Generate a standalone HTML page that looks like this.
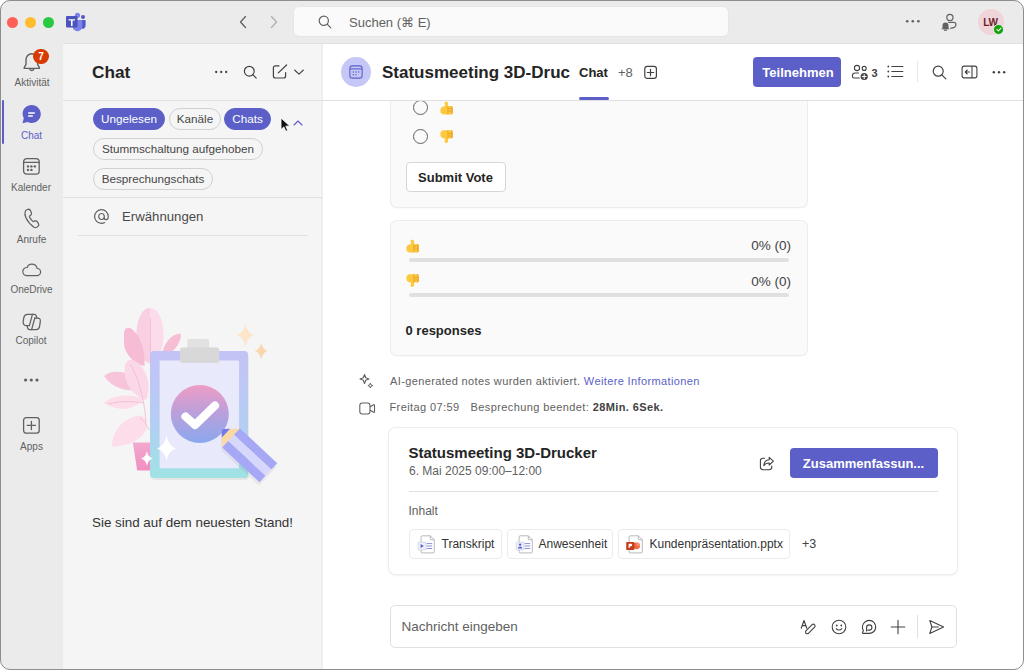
<!DOCTYPE html>
<html><head><meta charset="utf-8">
<style>
*{box-sizing:border-box;margin:0;padding:0}
html,body{width:1024px;height:670px;overflow:hidden;background:#fff}
body{font-family:"Liberation Sans",sans-serif;color:#242424;position:relative}
.win{position:absolute;left:0;top:0;width:1024px;height:670px;border-radius:10px;background:#ebebeb;overflow:hidden}
.frame{position:absolute;left:0;top:0;width:1024px;height:670px;border-radius:10px;border:1px solid #8e8e8e;pointer-events:none;z-index:50}
.a{position:absolute}
.t{position:absolute;white-space:nowrap;line-height:1}
svg{position:absolute;overflow:visible}
.light{position:absolute;width:11px;height:11px;border-radius:50%;top:16.6px}
.rl{position:absolute;left:0;width:63px;text-align:center;font-size:10px;color:#616161;line-height:1;white-space:nowrap}
.pill{position:absolute;height:22px;border-radius:11px;border:1px solid #d1d1d1;background:#f5f5f5;font-size:11.7px;color:#474747;line-height:20px;padding:0;text-align:center;white-space:nowrap}
.chip{border:1px solid #ebebeb;border-radius:4px;background:#fff}
.pill.on{background:#5b5fc7;border-color:#5b5fc7;color:#fff}
</style></head>
<body>
<div class="win">
  <!-- title bar -->
  <div class="light" style="left:6.9px;background:#ff5f57"></div>
  <div class="light" style="left:24.8px;background:#febc2e"></div>
  <div class="light" style="left:42.6px;background:#28c840"></div>
  <!-- teams logo -->
  <svg style="left:64px;top:11px" width="24" height="22" viewBox="0 0 24 22">
    <circle cx="13.5" cy="4.3" r="2.6" fill="#7b83eb"/>
    <circle cx="19" cy="6" r="2" fill="#5059c9"/>
    <path d="M15.6 9h5.2c.5 0 .8.3.8.8v4.6c0 2-1.6 3.4-3.4 3.4h0c-1.8 0-3.2-1.5-3.2-3.3V9.5z" fill="#5059c9"/>
    <path d="M9.5 9h8c.5 0 .8.3.8.8v5.4c0 2.8-2.3 5-5 5s-4.6-2-4.8-4.4z" fill="#7b83eb"/>
    <rect x="2" y="5" width="11.5" height="11.5" rx="1" fill="#4b53bc"/>
    <path d="M4.6 8.2h6.4v1.4H8.6v5.3H7V9.6H4.6z" fill="#fff"/>
  </svg>
  <!-- nav arrows -->
  <svg style="left:238px;top:15px" width="10" height="14" viewBox="0 0 10 14"><path d="M7.5 1.5L2.5 7l5 5.5" fill="none" stroke="#616161" stroke-width="1.3" stroke-linecap="round" stroke-linejoin="round"/></svg>
  <svg style="left:269px;top:15px" width="10" height="14" viewBox="0 0 10 14"><path d="M2.5 1.5L7.5 7l-5 5.5" fill="none" stroke="#b0b0b0" stroke-width="1.3" stroke-linecap="round" stroke-linejoin="round"/></svg>
  <!-- search -->
  <div class="a" style="left:294px;top:7px;width:434px;height:29px;background:#fafafa;border-radius:5px;box-shadow:0 0 0 0.5px #e2e2e2"></div>
  <svg style="left:318px;top:15px" width="14" height="14" viewBox="0 0 14 14"><circle cx="5.8" cy="5.8" r="4.6" fill="none" stroke="#616161" stroke-width="1.2"/><path d="M9.2 9.2l3.6 3.6" stroke="#616161" stroke-width="1.2" stroke-linecap="round"/></svg>
  <div class="t" style="left:349px;top:15.5px;font-size:13px;color:#616161">Suchen (⌘ E)</div>
  <!-- right title icons -->
  <svg style="left:905px;top:19px" width="16" height="5" viewBox="0 0 16 5"><circle cx="2.2" cy="2.3" r="1.3" fill="#616161"/><circle cx="7.8" cy="2.3" r="1.3" fill="#616161"/><circle cx="13.4" cy="2.3" r="1.3" fill="#616161"/></svg>
  <svg style="left:940px;top:12px" width="18" height="20" viewBox="0 0 18 20">
    <circle cx="9.9" cy="5.4" r="3.1" fill="none" stroke="#616161" stroke-width="1.2"/>
    <path d="M8.5 10.3h5.2c1.3 0 2.2.9 2.2 2 0 2-2 3.8-5.2 3.9" fill="none" stroke="#616161" stroke-width="1.2" stroke-linecap="round"/>
    <path d="M5.5 10.5c-1.8 0-3 1.3-3 3v2.5l-1.2 1.3h8.4l-1.2-1.3v-2.5c0-1.7-1.2-3-3-3z" fill="#616161"/>
    <path d="M4.4 18.2h2.2" stroke="#616161" stroke-width="1.2" stroke-linecap="round"/>
  </svg>
  <div class="a" style="left:978px;top:9px;width:26px;height:26px;border-radius:50%;background:#efd5d9"></div>
  <div class="t" style="left:977.5px;top:18px;width:26px;text-align:center;font-size:10px;font-weight:700;color:#6e1c2d;letter-spacing:-0.2px">LW</div>
  <div class="a" style="left:993px;top:24px;width:11px;height:11px;border-radius:50%;background:#13a10e;border:1px solid #ebebeb"></div>
  <svg style="left:996px;top:27px" width="6" height="5" viewBox="0 0 6 5"><path d="M1 2.6l1.4 1.3L5 1.2" fill="none" stroke="#fff" stroke-width="1.1" stroke-linecap="round" stroke-linejoin="round"/></svg>

  <!-- RAIL -->
  <div id="rail">
  <!-- Aktivitat -->
  <svg style="left:22px;top:52px" width="20" height="20" viewBox="0 0 20 20">
    <path d="M9.8 1.8c-3.4 0-5.8 2.6-5.8 6v4.6L2.2 15.6c-.2.4 0 .8.5.8h14.2c.5 0 .7-.4.5-.8L15.6 12.4V7.8c0-3.4-2.4-6-5.8-6z" fill="none" stroke="#616161" stroke-width="1.4" stroke-linejoin="round"/>
    <path d="M7.6 16.6c.2 1.2 1.1 1.9 2.2 1.9s2-.7 2.2-1.9" fill="none" stroke="#616161" stroke-width="1.4"/>
  </svg>
  <div class="a" style="left:33.2px;top:48.6px;width:15.5px;height:15.5px;border-radius:50%;background:#d83b01"></div>
  <div class="t" style="left:33.2px;top:51.6px;width:15.5px;text-align:center;font-size:10px;font-weight:700;color:#fff">7</div>
  <div class="rl" style="top:78px;left:0.5px">Aktivität</div>
  <!-- active bar -->
  <div class="a" style="left:2px;top:100px;width:2px;height:44px;background:#5b5fc7;border-radius:1px"></div>
  <!-- Chat -->
  <svg style="left:21px;top:104px" width="21" height="21" viewBox="0 0 21 21">
    <path d="M10.7 1C5.6 1 1.6 4.9 1.6 9.8c0 1.6.4 3.1 1.2 4.4L1.5 19.3l5.2-1.3c1.2.7 2.6 1 4 1 5.1 0 9.1-3.9 9.1-8.9S15.8 1 10.7 1z" fill="#5b5fc7"/>
    <rect x="7" y="8.2" width="7" height="1.5" rx=".75" fill="#fff"/>
    <rect x="7" y="11.2" width="5" height="1.5" rx=".75" fill="#fff"/>
  </svg>
  <div class="rl" style="top:131px;color:#5b5fc7;left:0px">Chat</div>
  <!-- Kalender -->
  <svg style="left:22px;top:157px" width="19" height="19" viewBox="0 0 19 19">
    <rect x="1.6" y="1.6" width="15.6" height="15.6" rx="3.2" fill="none" stroke="#616161" stroke-width="1.3"/>
    <path d="M1.6 5.4h15.6" stroke="#616161" stroke-width="1.3"/>
    <circle cx="6" cy="9.4" r="1.2" fill="#616161"/><circle cx="9.4" cy="9.4" r="1.2" fill="#616161"/><circle cx="12.8" cy="9.4" r="1.2" fill="#616161"/>
    <circle cx="6" cy="12.9" r="1.2" fill="#616161"/><circle cx="9.4" cy="12.9" r="1.2" fill="#616161"/>
  </svg>
  <div class="rl" style="top:183px;left:-0.5px">Kalender</div>
  <!-- Anrufe -->
  <svg style="left:22.8px;top:207.5px" width="16.5" height="18.5" viewBox="0 0 18 20">
    <path d="M4.2 1.8l1.4-.4c1-.3 2 .2 2.4 1.1l1.1 2.6c.4.8.2 1.8-.5 2.4L7.1 8.8c-.2.2-.2.5-.1.7.8 1.8 2.1 3.6 3.8 5 .2.2.5.2.7.1l1.6-.6c.9-.3 1.9 0 2.4.8l1.4 2.3c.5.9.4 2-.4 2.6l-.9.8c-1 .8-2.5 1-3.6.4C8.3 18.3 5.2 14.9 3.2 10.6 2 8.1 1.8 5.9 2.4 3.9c.3-1 1-1.8 1.8-2.1z" fill="none" stroke="#616161" stroke-width="1.35" stroke-linejoin="round"/>
  </svg>
  <div class="rl" style="top:235px;left:0px">Anrufe</div>
  <!-- OneDrive -->
  <svg style="left:21px;top:262px" width="21" height="15" viewBox="0 0 21 15">
    <path d="M10.8 2.2c-2.2 0-4 1.4-4.6 3.3H6c-2.3 0-4.2 1.8-4.2 4.1s1.9 4.1 4.2 4.1h9.8c2.1 0 3.8-1.6 3.8-3.6s-1.5-3.5-3.4-3.6c-.5-2.5-2.7-4.3-5.4-4.3z" fill="none" stroke="#616161" stroke-width="1.2"/>
  </svg>
  <div class="rl" style="top:284.5px;left:0px">OneDrive</div>
  <!-- Copilot -->
  <svg style="left:16px;top:306px" width="32" height="30" viewBox="0 0 32 30">
    <g fill="none" stroke="#616161" stroke-width="1.25" stroke-linejoin="round" stroke-linecap="round">
    <path d="M16.4 8.3H11.4C9.4 8.3 8.2 9.6 7.8 11.6L7.2 15.6C6.9 17.9 8 19.6 10 19.6H13.4"/>
    <path d="M16.4 8.3L13.4 19.6"/>
    <path d="M16.4 8.3H18.4C19.4 8.3 20 9 20.3 10L20.8 12"/>
    <path d="M18.8 12H21.8C23.7 12 24.6 13.5 24.3 15.4L23.7 19.6C23.4 21.9 22 23.6 20 23.6H15.6"/>
    <path d="M18.8 12L15.6 23.6"/>
    <path d="M15.6 23.6H13.6C12.6 23.6 11.9 23 11.6 22L11.1 19.6"/>
    </g>
  </svg>
  <div class="rl" style="top:335.5px;left:-0.5px">Copilot</div>
  <!-- more -->
  <svg style="left:23px;top:377px" width="17" height="6" viewBox="0 0 17 6"><circle cx="2.6" cy="3" r="1.6" fill="#616161"/><circle cx="8.3" cy="3" r="1.6" fill="#616161"/><circle cx="14" cy="3" r="1.6" fill="#616161"/></svg>
  <!-- Apps -->
  <svg style="left:22px;top:416px" width="19" height="19" viewBox="0 0 19 19">
    <rect x="1.6" y="1.6" width="15.6" height="15.6" rx="2.6" fill="none" stroke="#616161" stroke-width="1.3"/>
    <path d="M9.4 5.3v8.2M5.3 9.4h8.2" stroke="#616161" stroke-width="1.3" stroke-linecap="round"/>
  </svg>
  <div class="rl" style="top:442px;left:0px">Apps</div>
  </div>

  <!-- CHAT PANEL -->
  <div class="a" style="left:63px;top:44px;width:260px;height:626px;background:#f5f5f5;border-right:2px solid #efefef"></div>
  <div class="a" style="left:63px;top:43px;width:961px;height:1px;background:#e0e0e0"></div>

  <div class="t" style="left:92px;top:64px;font-size:17.2px;font-weight:700;color:#242424">Chat</div>
  <svg style="left:214px;top:69px" width="15" height="6" viewBox="0 0 15 6"><circle cx="2.2" cy="3" r="1.15" fill="#424242"/><circle cx="7.2" cy="3" r="1.15" fill="#424242"/><circle cx="12.2" cy="3" r="1.15" fill="#424242"/></svg>
  <svg style="left:243px;top:64.5px" width="16" height="16" viewBox="0 0 16 16"><circle cx="6.3" cy="6.2" r="4.9" fill="none" stroke="#424242" stroke-width="1.2"/><path d="M9.8 9.7l3.4 3.4" stroke="#424242" stroke-width="1.2" stroke-linecap="round"/></svg>
  <svg style="left:272px;top:64px" width="16" height="16" viewBox="0 0 16 16">
    <path d="M7 1.8H3.4c-1.2 0-2 .8-2 2v8.2c0 1.2.8 2 2 2h8.2c1.2 0 2-.8 2-2V8.6" fill="none" stroke="#424242" stroke-width="1.2" stroke-linecap="round"/>
    <path d="M6.3 8.9L14.6 1" fill="none" stroke="#424242" stroke-width="1.2" stroke-linecap="round"/>
  </svg>
  <svg style="left:292.5px;top:68px" width="12" height="8" viewBox="0 0 12 8"><path d="M1.6 2l4.4 4.1L10.4 2" fill="none" stroke="#424242" stroke-width="1.1" stroke-linecap="round" stroke-linejoin="round"/></svg>

  <div class="pill on" style="left:93px;top:108px;width:72px">Ungelesen</div>
  <div class="pill" style="left:169px;top:108px;width:52px">Kanäle</div>
  <div class="pill on" style="left:224px;top:108px;width:47px">Chats</div>
  <svg style="left:280px;top:117px" width="11" height="15" viewBox="0 0 11 15"><path d="M1 1v11.5l2.9-2.6 1.9 4.4 1.9-.8-1.9-4.3 3.9-.2z" fill="#111" stroke="#fff" stroke-width=".8" stroke-linejoin="round"/></svg>
  <svg style="left:292px;top:119px" width="12" height="8" viewBox="0 0 12 8"><path d="M2 6l4-4 4 4" fill="none" stroke="#5b5fc7" stroke-width="1.1" stroke-linecap="round" stroke-linejoin="round"/></svg>
  <div class="pill" style="left:93px;top:138px;width:170px">Stummschaltung aufgehoben</div>
  <div class="pill" style="left:93px;top:167.5px;width:120px">Besprechungschats</div>

  <div class="a" style="left:63px;top:197px;width:259px;height:1px;background:#e0e0e0"></div>
  <svg style="left:93px;top:208px" width="17" height="17" viewBox="0 0 17 17"><path d="M11.3 8.5c0 1.7-1.2 3-2.8 3s-2.8-1.3-2.8-3 1.2-3 2.8-3 2.8 1.3 2.8 3zm0 0v1.2c0 1.2.9 2 1.9 2s2-1 2-2.6V8.5C15.2 4.6 12.2 1.6 8.5 1.6S1.6 4.6 1.6 8.5s3 6.9 6.9 6.9c1.2 0 2.3-.3 3.2-.8" fill="none" stroke="#616161" stroke-width="1.2" stroke-linecap="round"/></svg>
  <div class="t" style="left:122px;top:210px;font-size:13.2px;color:#4a4a4a">Erwähnungen</div>
  <div class="a" style="left:78px;top:235px;width:230px;height:1px;background:#e0e0e0"></div>

  <svg style="left:100px;top:300px" width="190" height="195" viewBox="0 0 190 195">
    <defs>
      <linearGradient id="lf" x1="0" y1="0" x2="0" y2="1"><stop offset="0" stop-color="#f6c4dc"/><stop offset="1" stop-color="#fbe3ee"/></linearGradient>
      <linearGradient id="lf2" x1="0" y1="0" x2="1" y2="0"><stop offset="0" stop-color="#fbe0ec"/><stop offset="1" stop-color="#f8d0e2"/></linearGradient>
      <linearGradient id="cb" x1="0" y1="0" x2="0" y2="1"><stop offset="0" stop-color="#c3c3f6"/><stop offset=".55" stop-color="#b5cdf3"/><stop offset="1" stop-color="#9fe3e4"/></linearGradient>
      <linearGradient id="ck" x1="0" y1="0" x2="0" y2="1"><stop offset="0" stop-color="#ee9cc6"/><stop offset=".5" stop-color="#b8a0dc"/><stop offset="1" stop-color="#8aa8ee"/></linearGradient>
      <linearGradient id="pot" x1="0" y1="0" x2="0" y2="1"><stop offset="0" stop-color="#f3a9cf"/><stop offset="1" stop-color="#f08fc0"/></linearGradient>
    </defs>
    <!-- plant leaves -->
    <path d="M50 8C58 8 63.5 20 63.5 35C63.5 50 57 62 50 63.5C43 62 36.5 50 36.5 35C36.5 20 42 8 50 8z" fill="#fcdcea"/>
    <path d="M50 8C42 8 36.5 20 36.5 35C36.5 50 43 62 50 63.5z" fill="#f9d0e2"/>
    <path d="M24 34C24 27 29 26 33 30C41 37 45.5 51 44.5 66C34 64 26 55 24 45z" fill="#f6bcd5"/>
    <path d="M80.6 33.6C72 34 64 42 61.5 56C70 55 78 48 80.6 38z" fill="#f6bdd5"/>
    <path d="M4 76C10 71 22 70 31 76L34 90C22 91 11 86 4 76z" fill="#f7c4d9"/>
    <path d="M29 60C38 59 47 70 48.5 85C49 92 47.5 97 46 100C36 97 27 88 25 76C24 68 25 61 29 60z" fill="#fbd8e7"/>
    <path d="M4 103C12 95 28 93 44 99C36 108 22 114 4 103z" fill="#fcdde9"/>
    <path d="M12 146.5C12 132 22 118 40 115.5C47 117 48 123 46 130C41 140 28 146.5 12 146.5z" fill="#fcdde9"/>
    <path d="M50.5 18V140M30 64C37 75 44 95 46 122M8 104C20 101 32 101 44 103M40 118C44 121 47 125 49 130" fill="none" stroke="#f3b6d0" stroke-width=".8"/>
    <!-- pot -->
    <path d="M32.8 142.4H53L51.2 170.6H37.2z" fill="url(#pot)"/>
    <!-- clipboard shadow -->
    <rect x="51" y="53" width="98" height="127" rx="4" fill="#000" opacity=".06"/>
    <!-- clipboard -->
    <rect x="50" y="51" width="98" height="127" rx="3.5" fill="url(#cb)"/>
    <rect x="59.6" y="60.5" width="79.5" height="107.7" rx="1" fill="#e9e9fc"/>
    <rect x="87.3" y="39" width="21.8" height="11" rx="2" fill="#e2e2e2"/>
    <rect x="80" y="47.5" width="39.3" height="15.5" rx="2.5" fill="#d8d8d8"/>
    <!-- check circle -->
    <circle cx="99.8" cy="114" r="29" fill="url(#ck)"/>
    <path d="M85.5 116.5l9.5 8.5 20-19.5" fill="none" stroke="#fff" stroke-width="8.2" stroke-linecap="round" stroke-linejoin="round"/>
    <!-- pencil -->
    <g transform="translate(122.3 129.7) rotate(43)">
      <path d="M1 2.5 L13 14 L64 14 L64 -12 L13 -12 L1 -1.5 C-.5 -.5 -.5 1.5 1 2.5z" fill="#000" opacity=".05" transform="translate(1 2)"/>
      <path d="M0.8 -1.8 L12 -13 L12 13 L0.8 1.8 C-.4 .8 -.4 -.8 .8 -1.8z" fill="#fbd9a6"/>
      <path d="M0.8 -1.8 L5 -6 L5 6 L0.8 1.8 C-.4 .8 -.4 -.8 .8 -1.8z" fill="#7378ea"/>
      <rect x="12" y="-13" width="51" height="8.7" fill="#a6a8f5"/>
      <rect x="12" y="-4.3" width="51" height="8.6" fill="#d6d7fb"/>
      <rect x="12" y="4.3" width="51" height="8.7" fill="#a6a8f5"/>
    </g>
    <!-- sparkles -->
    <path d="M145.5 23.40Q147.07 32.91 154.20 35Q147.07 37.09 145.5 46.60Q143.93 37.09 136.80 35Q143.93 32.91 145.5 23.40z" fill="#fce5c8"/>
    <path d="M161.2 42.50Q162.37 49.47 167.70 51Q162.37 52.53 161.2 59.50Q160.03 52.53 154.70 51Q160.03 49.47 161.2 42.50z" fill="#fad6ad"/>
    <path d="M66.5 135.60Q68.21 146.10 76.00 148.4Q68.21 150.70 66.5 161.20Q64.79 150.70 57.00 148.4Q64.79 146.10 66.5 135.60z" fill="#fff"/>
    <path d="M46.9 151.30Q47.98 157.20 52.90 158.5Q47.98 159.80 46.9 165.70Q45.82 159.80 40.90 158.5Q45.82 157.20 46.9 151.30z" fill="#fff"/>
  </svg>
  <div class="t" style="left:92px;top:515.5px;font-size:13.4px;color:#333">Sie sind auf dem neuesten Stand!</div>

  <!-- MAIN -->
  <div class="a" style="left:323px;top:44px;width:701px;height:626px;background:#fff"></div>
  <div class="a" style="left:63px;top:100px;width:961px;height:1px;background:#e0e0e0"></div>
  <!-- main header -->
  <div class="a" style="left:341px;top:57px;width:30px;height:30px;border-radius:50%;background:#c5c8f6"></div>
  <svg style="left:349px;top:65px" width="14" height="14" viewBox="0 0 14 14">
    <rect x=".9" y=".9" width="12.2" height="12.2" rx="2.4" fill="none" stroke="#5b5fc7" stroke-width="1.1"/>
    <path d="M.9 3.9h12.2" stroke="#5b5fc7" stroke-width="1.1"/>
    <circle cx="4.3" cy="7" r=".75" fill="#5b5fc7"/><circle cx="7" cy="7" r=".75" fill="#5b5fc7"/><circle cx="9.7" cy="7" r=".75" fill="#5b5fc7"/>
    <circle cx="4.3" cy="9.8" r=".75" fill="#5b5fc7"/><circle cx="7" cy="9.8" r=".75" fill="#5b5fc7"/>
  </svg>
  <div class="a" style="left:382px;top:62px;width:188px;height:22px;overflow:hidden"><div class="t" style="left:0;top:2px;font-size:17px;font-weight:700;color:#242424">Statusmeeting 3D-Drucker</div></div>
  <div class="t" style="left:579px;top:66px;font-size:13px;font-weight:700;color:#242424">Chat</div>
  <div class="a" style="left:579px;top:97px;width:30px;height:3px;border-radius:1.5px;background:#5b5fc7"></div>
  <div class="t" style="left:618px;top:66px;font-size:13px;color:#616161">+8</div>
  <svg style="left:643px;top:64.5px" width="15" height="15" viewBox="0 0 15 15"><rect x="1.8" y="1.4" width="11.6" height="12" rx="2.4" fill="none" stroke="#424242" stroke-width="1.2"/><path d="M7.5 4.3v6.4M4.3 7.5h6.4" stroke="#424242" stroke-width="1.2" stroke-linecap="round"/></svg>
  <div class="a" style="left:753px;top:57px;width:88px;height:30px;border-radius:4px;background:#5b5fc7"></div>
  <div class="t" style="left:754px;top:66px;width:88px;text-align:center;font-size:13px;font-weight:700;color:#fff">Teilnehmen</div>
  <svg style="left:851px;top:64px" width="19" height="17" viewBox="0 0 19 17">
    <circle cx="6" cy="4" r="2.6" fill="none" stroke="#424242" stroke-width="1.1"/>
    <circle cx="13.2" cy="4.4" r="2" fill="none" stroke="#424242" stroke-width="1.1"/>
    <path d="M8.4 14H3.2c-1 0-1.8-.8-1.8-1.8v-.4c0-1.6 1.3-2.8 2.8-2.8h3.4" fill="none" stroke="#424242" stroke-width="1.1" stroke-linecap="round"/>
    <circle cx="13.2" cy="12.5" r="3.6" fill="#424242"/>
    <path d="M13.2 10.6v3.8M11.3 12.5h3.8" stroke="#fff" stroke-width="1.1" stroke-linecap="round"/>
  </svg>
  <div class="t" style="left:871.5px;top:67.5px;font-size:11px;font-weight:700;color:#424242">3</div>
  <svg style="left:887px;top:65px" width="17" height="13" viewBox="0 0 17 13">
    <circle cx="1.3" cy="1.5" r=".9" fill="#424242"/><circle cx="1.3" cy="6.5" r=".9" fill="#424242"/><circle cx="1.3" cy="11.5" r=".9" fill="#424242"/>
    <path d="M4.8 1.5h11M4.8 6.5h11M4.8 11.5h11" stroke="#424242" stroke-width="1.2" stroke-linecap="round"/>
  </svg>
  <div class="a" style="left:917px;top:61px;width:1px;height:21px;background:#e6e6e6"></div>
  <svg style="left:932px;top:65px" width="15" height="15" viewBox="0 0 15 15"><circle cx="6.2" cy="6.2" r="5" fill="none" stroke="#424242" stroke-width="1.2"/><path d="M9.8 9.8l4 4" stroke="#424242" stroke-width="1.2" stroke-linecap="round"/></svg>
  <svg style="left:961px;top:65px" width="17" height="14" viewBox="0 0 17 14">
    <rect x="1.1" y="1.1" width="14.8" height="11.8" rx="2.2" fill="none" stroke="#424242" stroke-width="1.1"/>
    <path d="M11 1.1v11.8" stroke="#424242" stroke-width="1.1"/>
    <path d="M8.6 7H4.4M6.2 5L4.3 7l1.9 2" fill="none" stroke="#424242" stroke-width="1.1" stroke-linecap="round" stroke-linejoin="round"/>
  </svg>
  <svg style="left:992px;top:70px" width="14" height="5" viewBox="0 0 14 5"><circle cx="1.8" cy="2.2" r="1.2" fill="#424242"/><circle cx="7" cy="2.2" r="1.2" fill="#424242"/><circle cx="12.2" cy="2.2" r="1.2" fill="#424242"/></svg>

  <!-- messages (clipped) -->
  <div class="a" id="msgs" style="left:322px;top:101px;width:701px;height:568px;overflow:hidden">
    <!-- poll card 1 -->
    <div class="a card" style="left:68.5px;top:-60px;width:416px;height:166px;border-radius:6px;background:#fafafa;box-shadow:0 0 0 1px #ececec,0 1px 2px rgba(0,0,0,.08)"></div>
    <div class="a" style="left:91.3px;top:-1.5px;width:15px;height:15px;border-radius:50%;border:1.2px solid #616161"></div>
    <div class="a" style="left:91.3px;top:27.9px;width:15px;height:15px;border-radius:50%;border:1.2px solid #616161"></div>
    <svg style="left:117.5px;top:-0.5px" width="13" height="14" viewBox="0 0 13 14"><path d="M4.4 1.8c.3-1.3 2.9-1.7 3.5-.2.5 1.1.3 2.4-.1 3.5h3.1c1 0 1.7.7 1.7 1.7v4.9c0 1-.7 1.7-1.7 1.7H3.4C1.7 13.4.4 12 .4 10.3V8.8c0-1.5.9-2.7 2.3-3.1l1.5-.5c.6-.2.9-.6 1-1.2z" fill="#fdc93f"/><path d="M7.9 5.1v8.3M8.2 7.6h4.4M8.2 10h4.4" stroke="#e29a1e" stroke-width=".7" fill="none"/><path d="M11 5.1c1 0 1.7.7 1.7 1.7v4.9c0 1-.7 1.7-1.7 1.7h-.6c.6-.2 1-.8 1-1.5V6.6c0-.7-.4-1.3-1-1.5z" fill="#eba52b"/></svg>
    <svg style="left:117.5px;top:29px" width="13" height="14" viewBox="0 0 13 14"><g transform="translate(0 13.6) scale(1 -1)"><path d="M4.4 1.8c.3-1.3 2.9-1.7 3.5-.2.5 1.1.3 2.4-.1 3.5h3.1c1 0 1.7.7 1.7 1.7v4.9c0 1-.7 1.7-1.7 1.7H3.4C1.7 13.4.4 12 .4 10.3V8.8c0-1.5.9-2.7 2.3-3.1l1.5-.5c.6-.2.9-.6 1-1.2z" fill="#fdc93f"/><path d="M7.9 5.1v8.3M8.2 7.6h4.4M8.2 10h4.4" stroke="#e29a1e" stroke-width=".7" fill="none"/><path d="M11 5.1c1 0 1.7.7 1.7 1.7v4.9c0 1-.7 1.7-1.7 1.7h-.6c.6-.2 1-.8 1-1.5V6.6c0-.7-.4-1.3-1-1.5z" fill="#eba52b"/></g></svg>
    <div class="a" style="left:83.5px;top:61px;width:100.5px;height:30px;border-radius:4px;background:#fff;border:1px solid #d6d6d6"></div>
    <div class="t" style="left:84px;top:69.7px;width:99px;text-align:center;font-size:13px;font-weight:700;color:#242424">Submit Vote</div>
    <!-- poll card 2 -->
    <div class="a card" style="left:68.5px;top:120px;width:416px;height:134px;border-radius:6px;background:#fafafa;box-shadow:0 0 0 1px #ececec,0 1px 2px rgba(0,0,0,.08)"></div>
    <svg style="left:84px;top:137.5px" width="13" height="14" viewBox="0 0 13 14"><path d="M4.4 1.8c.3-1.3 2.9-1.7 3.5-.2.5 1.1.3 2.4-.1 3.5h3.1c1 0 1.7.7 1.7 1.7v4.9c0 1-.7 1.7-1.7 1.7H3.4C1.7 13.4.4 12 .4 10.3V8.8c0-1.5.9-2.7 2.3-3.1l1.5-.5c.6-.2.9-.6 1-1.2z" fill="#fdc93f"/><path d="M7.9 5.1v8.3M8.2 7.6h4.4M8.2 10h4.4" stroke="#e29a1e" stroke-width=".7" fill="none"/><path d="M11 5.1c1 0 1.7.7 1.7 1.7v4.9c0 1-.7 1.7-1.7 1.7h-.6c.6-.2 1-.8 1-1.5V6.6c0-.7-.4-1.3-1-1.5z" fill="#eba52b"/></svg>
    <div class="t" style="left:369px;top:138px;width:100px;text-align:right;font-size:13.5px;color:#424242">0% (0)</div>
    <div class="a" style="left:87px;top:156.8px;width:380px;height:4px;border-radius:2px;background:#e0e0e0"></div>
    <svg style="left:84px;top:173px" width="13" height="14" viewBox="0 0 13 14"><g transform="translate(0 13.6) scale(1 -1)"><path d="M4.4 1.8c.3-1.3 2.9-1.7 3.5-.2.5 1.1.3 2.4-.1 3.5h3.1c1 0 1.7.7 1.7 1.7v4.9c0 1-.7 1.7-1.7 1.7H3.4C1.7 13.4.4 12 .4 10.3V8.8c0-1.5.9-2.7 2.3-3.1l1.5-.5c.6-.2.9-.6 1-1.2z" fill="#fdc93f"/><path d="M7.9 5.1v8.3M8.2 7.6h4.4M8.2 10h4.4" stroke="#e29a1e" stroke-width=".7" fill="none"/><path d="M11 5.1c1 0 1.7.7 1.7 1.7v4.9c0 1-.7 1.7-1.7 1.7h-.6c.6-.2 1-.8 1-1.5V6.6c0-.7-.4-1.3-1-1.5z" fill="#eba52b"/></g></svg>
    <div class="t" style="left:369px;top:173.5px;width:100px;text-align:right;font-size:13.5px;color:#424242">0% (0)</div>
    <div class="a" style="left:87px;top:192.3px;width:380px;height:4px;border-radius:2px;background:#e0e0e0"></div>
    <div class="t" style="left:83.5px;top:223px;font-size:13px;font-weight:700;color:#242424">0 responses</div>
    <!-- AI notes -->
    <svg style="left:36px;top:272px" width="17" height="17" viewBox="0 0 17 17">
      <path d="M6.5 1.5l1.2 3.2 3.3 1.3-3.3 1.3-1.2 3.2-1.2-3.2L2 6l3.3-1.3z" fill="none" stroke="#616161" stroke-width="1.1" stroke-linejoin="round"/>
      <path d="M12.3 10.2l.7 1.7 1.7.7-1.7.7-.7 1.7-.7-1.7-1.7-.7 1.7-.7z" fill="none" stroke="#616161" stroke-width="1" stroke-linejoin="round"/>
    </svg>
    <div class="t" style="left:68px;top:275.2px;font-size:11px;letter-spacing:.38px;color:#616161">AI-generated notes wurden aktiviert. <span style="color:#5b5fc7">Weitere Informationen</span></div>
    <svg style="left:37px;top:301px" width="17" height="13" viewBox="0 0 17 13">
      <rect x=".8" y="1" width="10.2" height="11" rx="2.4" fill="none" stroke="#616161" stroke-width="1.1"/>
      <path d="M11 5l3.6-2.3c.4-.3.9 0 .9.5v6.6c0 .5-.5.8-.9.5L11 8" fill="none" stroke="#616161" stroke-width="1.1" stroke-linejoin="round"/>
    </svg>
    <div class="t" style="left:67.5px;top:301px;font-size:11px;letter-spacing:.4px;color:#616161">Freitag 07:59 <span style="margin-left:7.5px">Besprechung beendet: <b style="color:#424242">28Min. 6Sek.</b></span></div>
    <!-- meeting card -->
    <div class="a" style="left:67px;top:327.3px;width:567.5px;height:145.5px;border-radius:6.5px;background:#fff;box-shadow:0 0 0 1px #ededed,0 1px 3px rgba(0,0,0,.1)"></div>
    <div class="t" style="left:86.5px;top:344.4px;font-size:15px;font-weight:700;color:#242424">Statusmeeting 3D-Drucker</div>
    <div class="t" style="left:87px;top:363.6px;font-size:12px;color:#616161">6. Mai 2025 09:00–12:00</div>
    <svg style="left:437px;top:355px" width="16" height="15" viewBox="0 0 16 15">
      <path d="M5.6 2.3H4c-1.5 0-2.6 1.1-2.6 2.6v6.2c0 1.5 1.1 2.6 2.6 2.6h6.2c1.5 0 2.6-1.1 2.6-2.6v-1" fill="none" stroke="#424242" stroke-width="1.1" stroke-linecap="round"/>
      <path d="M10.2 1.4l4.2 3.8-4.2 3.8V7c-2.5 0-4.3.7-5.4 2.6.2-3.2 2-5.6 5.4-5.8z" fill="none" stroke="#424242" stroke-width="1.1" stroke-linejoin="round"/>
    </svg>
    <div class="a" style="left:467.5px;top:347.2px;width:148px;height:29.5px;border-radius:4px;background:#5b5fc7"></div>
    <div class="t" style="left:467.5px;top:355.5px;width:148px;text-align:center;font-size:13px;font-weight:700;color:#fff">Zusammenfassun...</div>
    <div class="a" style="left:86.8px;top:390px;width:529px;height:1px;background:#e0e0e0"></div>
    <div class="t" style="left:86.5px;top:403.8px;font-size:12px;color:#616161">Inhalt</div>
    <div class="a chip" style="left:86.5px;top:428px;width:93px;height:29.5px"></div>
    <div class="a chip" style="left:184.5px;top:428px;width:106.5px;height:29.5px"></div>
    <div class="a chip" style="left:295.6px;top:428px;width:172px;height:29.5px"></div>
    <svg style="left:95px;top:433px" width="20" height="20" viewBox="0 0 20 20">
      <path d="M5 1.8h8.3l4 4V18c0 .5-.4.9-.9.9H5c-.5 0-.9-.4-.9-.9V2.7c0-.5.4-.9.9-.9z" fill="#fff" stroke="#a8a8a8" stroke-width=".8"/>
      <path d="M13.3 1.8v3.2c0 .5.3.8.8.8h3.2" fill="none" stroke="#a8a8a8" stroke-width=".8"/>
      <rect x="1.2" y="8.1" width="7.8" height="7.8" rx=".7" fill="#eef0fb" stroke="#b9bce6" stroke-width=".5"/>
      <path d="M3.6 9.9v4.2l3.3-2.1z" fill="#5b5fc7"/>
      <path d="M9.6 9.6h5.6M9.6 12h5.6M9.6 14.5h5.6" stroke="#7f83d6" stroke-width=".9"/>
    </svg>
    <div class="t" style="left:119.5px;top:437.4px;font-size:12px;color:#333">Transkript</div>
    <svg style="left:192.5px;top:433px" width="20" height="20" viewBox="0 0 20 20">
      <path d="M5 1.8h8.3l4 4V18c0 .5-.4.9-.9.9H5c-.5 0-.9-.4-.9-.9V2.7c0-.5.4-.9.9-.9z" fill="#fff" stroke="#a8a8a8" stroke-width=".8"/>
      <path d="M13.3 1.8v3.2c0 .5.3.8.8.8h3.2" fill="none" stroke="#a8a8a8" stroke-width=".8"/>
      <rect x="1.2" y="8.1" width="7.8" height="7.8" rx=".7" fill="#eef0fb" stroke="#b9bce6" stroke-width=".5"/>
      <circle cx="5.1" cy="10.6" r="1.2" fill="#5b5fc7"/><path d="M3 14.6c0-1.3.9-2.1 2.1-2.1s2.1.8 2.1 2.1z" fill="#5b5fc7"/>
      <path d="M9.6 9.6h5.6M9.6 12h5.6M9.6 14.5h5.6" stroke="#7f83d6" stroke-width=".9"/>
    </svg>
    <div class="t" style="left:216.5px;top:437.4px;font-size:12px;color:#333">Anwesenheit</div>
    <svg style="left:303px;top:433px" width="20" height="20" viewBox="0 0 20 20">
      <path d="M5 1.8h8.3l4 4V18c0 .5-.4.9-.9.9H5c-.5 0-.9-.4-.9-.9V2.7c0-.5.4-.9.9-.9z" fill="#fff" stroke="#a8a8a8" stroke-width=".8"/>
      <path d="M13.3 1.8v3.2c0 .5.3.8.8.8h3.2" fill="none" stroke="#a8a8a8" stroke-width=".8"/>
      <circle cx="11.6" cy="11.8" r="3.4" fill="#ed6c47"/><path d="M11.6 8.4v3.4H15a3.4 3.4 0 0 0-3.4-3.4z" fill="#ff8f6b"/>
      <rect x="1.2" y="7.9" width="8.2" height="8.2" rx=".8" fill="#c43e1c"/>
      <path d="M3.6 14.1V9.7h2c1 0 1.6.6 1.6 1.35S6.6 12.4 5.6 12.4H4.7v1.7z" fill="#fff"/>
    </svg>
    <div class="t" style="left:327.5px;top:437.4px;font-size:12px;color:#333">Kundenpräsentation.pptx</div>
    <div class="t" style="left:480px;top:437.4px;font-size:12.5px;color:#424242">+3</div>
    <!-- compose -->
    <div class="a" style="left:67.8px;top:504px;width:567px;height:43px;border-radius:5px;background:#fff;border:1px solid #e0e0e0"></div>
    <div class="t" style="left:79.5px;top:519px;font-size:13.5px;color:#616161">Nachricht eingeben</div>
    <svg style="left:478px;top:518px" width="17" height="16" viewBox="0 0 17 16">
      <path d="M1.2 9.2L4 1.5l2.8 7.7M2.2 6.6h3.6" fill="none" stroke="#424242" stroke-width="1.1" stroke-linecap="round" stroke-linejoin="round"/>
      <path d="M14.6 5.8c.7.7.7 1.7 0 2.4l-6.2 6.2c-.3.3-.7.4-1.1.3l-1.4-.3-.3-1.4c-.1-.4 0-.8.3-1.1l6.2-6.2c.7-.6 1.8-.6 2.5.1z" fill="none" stroke="#424242" stroke-width="1.1" stroke-linejoin="round"/>
    </svg>
    <svg style="left:509px;top:518px" width="16" height="16" viewBox="0 0 16 16">
      <circle cx="8" cy="8" r="6.8" fill="none" stroke="#424242" stroke-width="1.1"/>
      <circle cx="5.7" cy="6.5" r=".9" fill="#424242"/><circle cx="10.3" cy="6.5" r=".9" fill="#424242"/>
      <path d="M5.2 9.6c.7.9 1.7 1.4 2.8 1.4s2.1-.5 2.8-1.4" fill="none" stroke="#424242" stroke-width="1.1" stroke-linecap="round"/>
    </svg>
    <svg style="left:538.5px;top:518px" width="16" height="16" viewBox="0 0 16 16">
      <path d="M8.3 1.4c3.6 0 6.4 2.9 6.4 6.5s-2.8 6.5-6.4 6.5H2c-.4 0-.7-.4-.5-.8l.9-2c-.6-1-1-2.2-1-3.6 0-3.7 3.2-6.6 6.9-6.6z" fill="none" stroke="#424242" stroke-width="1.1" stroke-linejoin="round"/>
      <path d="M5.6 12V8.6c0-1.5 1.2-2.7 2.7-2.7s2.6 1.2 2.6 2.6-1.2 2.6-2.6 2.6H6.8" fill="none" stroke="#424242" stroke-width="1.1" stroke-linecap="round"/>
    </svg>
    <svg style="left:568px;top:518px" width="16" height="16" viewBox="0 0 16 16"><path d="M8 1.2v13.6M1.2 8h13.6" stroke="#424242" stroke-width="1.1" stroke-linecap="round"/></svg>
    <div class="a" style="left:595px;top:514px;width:1px;height:22.5px;background:#e0e0e0"></div>
    <svg style="left:605.5px;top:518px" width="17" height="16" viewBox="0 0 17 16">
      <path d="M1.8 1.6L15.6 8 1.8 14.4 3.9 8z" fill="none" stroke="#424242" stroke-width="1.1" stroke-linejoin="round"/>
      <path d="M3.9 8h6.5" stroke="#424242" stroke-width="1.1" stroke-linecap="round"/>
    </svg>
  </div>
</div>
<div class="frame"></div>
</body></html>
